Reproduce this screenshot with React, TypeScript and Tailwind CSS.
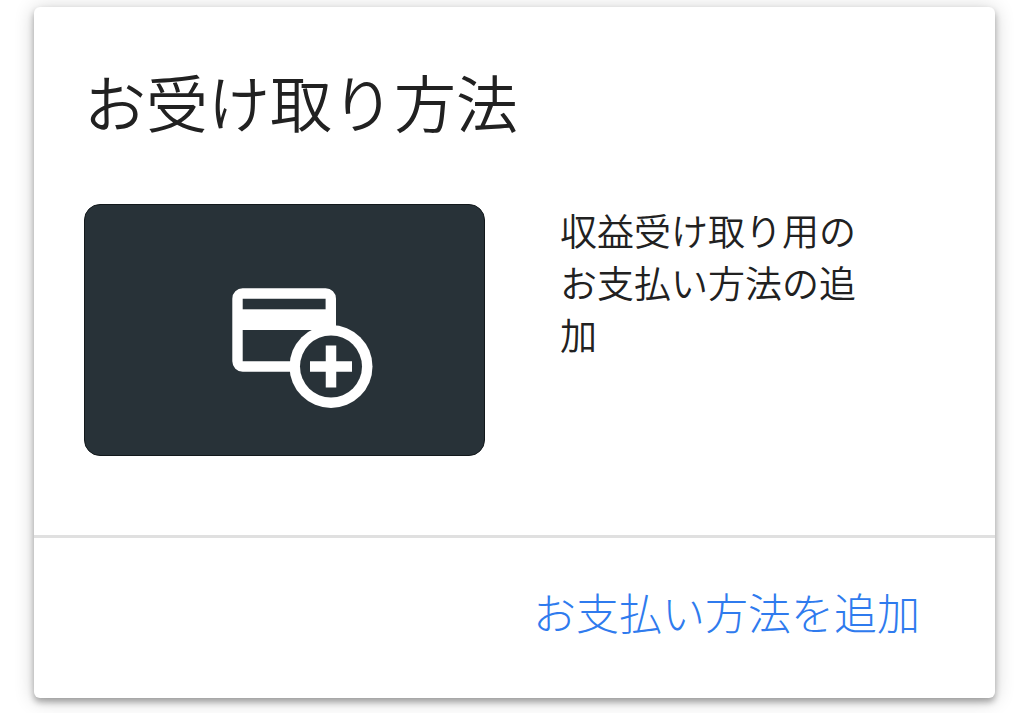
import React from 'react';

const AddCardIcon: React.FC = () => (
  <svg viewBox="0 0 141 120" className="w-[141px] h-[120px]" fill="none" aria-hidden="true">
    <rect x="5.5" y="5.5" width="93.3" height="73" rx="5.2" stroke="white" strokeWidth="10.4" />
    <rect x="5" y="21.3" width="94" height="20.7" fill="white" />
    <circle cx="99" cy="78.5" r="41.5" fill="white" />
    <circle cx="99" cy="78.5" r="31" fill="#283238" />
    <path d="M99 57.5v42M78 78.5h42" stroke="white" strokeWidth="10.5" />
  </svg>
);

export default function App() {
  return (
    <main className="min-h-screen bg-white pt-[7px] pr-[29px] pb-[14px] pl-[34px] font-['Noto_Sans_CJK_JP',sans-serif] font-[350] text-[#212121]">
      <section className="rounded-md bg-white shadow-[0_4px_6px_rgba(0,0,0,0.3),0_2px_20px_rgba(0,0,0,0.2)]">
        <div className="px-[50px] pt-[50px] pb-[79px]">
          <h1 className="text-[62px] leading-[88px]">お受け取り方法</h1>
          <div className="mt-[59px] flex items-start gap-[75px]">
            <div className="flex h-[252px] w-[401px] shrink-0 items-center justify-center rounded-2xl border border-[#12181b] bg-[#283238] pt-9 pl-9">
              <AddCardIcon />
            </div>
            <p className="max-w-[300px] text-[37px] leading-[52px]">
              収益受け取り用のお支払い方法の追加
            </p>
          </div>
        </div>
        <div className="flex justify-end border-t-[3px] border-[#e0e0e0] px-[75px] pt-[41px] pb-[55px]">
          <button type="button" className="text-[43px] leading-[64px] font-light text-[#2f7bee]">
            お支払い方法を追加
          </button>
        </div>
      </section>
    </main>
  );
}
